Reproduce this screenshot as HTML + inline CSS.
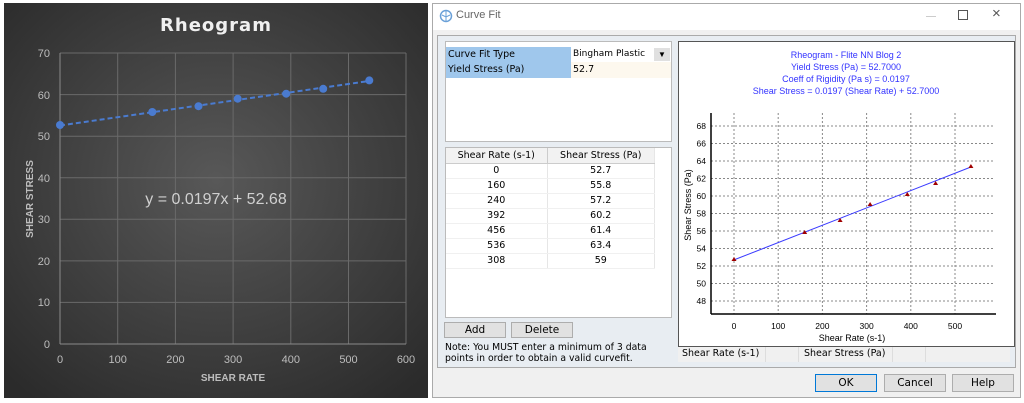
<!DOCTYPE html>
<html><head><style>
*{margin:0;padding:0;box-sizing:border-box}
body{width:1024px;height:403px;background:#fff;position:relative;font-family:"Liberation Sans",sans-serif;overflow:hidden}
.abs{position:absolute}
.t{font-family:"DejaVu Sans","Liberation Sans",sans-serif;font-size:9.5px;color:#000}
.btn{position:absolute;background:#e1e1e1;border:1px solid #adadad;font-size:10.5px;text-align:center;line-height:16px;font-family:"DejaVu Sans",sans-serif}
td{border-right:1px solid #e6e6e6;border-bottom:1px solid #f0f0f0;height:15px;text-align:center;font-family:"DejaVu Sans",sans-serif;font-size:9.5px}
</style></head><body>
<svg class="abs" style="left:0;top:0" width="430" height="403">
<defs><radialGradient id="g" cx="50%" cy="45%" r="70%"><stop offset="0" stop-color="#585858"/><stop offset="1" stop-color="#2b2b2b"/></radialGradient></defs>
<rect x="4" y="3" width="424" height="395" fill="url(#g)"/>
<g stroke="#6a6a6a" stroke-width="1">
<line x1="60" y1="53" x2="406" y2="53"/><line x1="60" y1="94.6" x2="406" y2="94.6"/><line x1="60" y1="136.2" x2="406" y2="136.2"/><line x1="60" y1="177.7" x2="406" y2="177.7"/><line x1="60" y1="219.3" x2="406" y2="219.3"/><line x1="60" y1="260.9" x2="406" y2="260.9"/><line x1="60" y1="302.4" x2="406" y2="302.4"/>
<line x1="117.7" y1="53" x2="117.7" y2="344"/><line x1="175.4" y1="53" x2="175.4" y2="344"/><line x1="233.1" y1="53" x2="233.1" y2="344"/><line x1="290.8" y1="53" x2="290.8" y2="344"/><line x1="348.5" y1="53" x2="348.5" y2="344"/><line x1="406" y1="53" x2="406" y2="344"/>
</g>
<g stroke="#8a8a8a"><line x1="60" y1="53" x2="60" y2="344"/><line x1="60" y1="344" x2="406" y2="344"/></g>
<line x1="60" y1="125.5" x2="369" y2="81" stroke="#4a7bd0" stroke-width="2" stroke-dasharray="5,3"/>
<g fill="#4a7bd0"><circle cx="60" cy="125" r="4"/><circle cx="152.3" cy="112" r="4"/><circle cx="198.5" cy="106.2" r="4"/><circle cx="237.7" cy="98.7" r="4"/><circle cx="286.2" cy="93.7" r="4"/><circle cx="323.2" cy="88.8" r="4"/><circle cx="369.3" cy="80.4" r="4"/></g>
<text x="216" y="31" fill="#f0f0f0" font-size="18" font-weight="bold" text-anchor="middle" font-family="DejaVu Sans" letter-spacing="1">Rheogram</text>
<g fill="#bdbdbd" font-size="11" text-anchor="end" font-family="Liberation Sans">
<text x="50" y="57">70</text><text x="50" y="99">60</text><text x="50" y="140">50</text><text x="50" y="182">40</text><text x="50" y="223">30</text><text x="50" y="265">20</text><text x="50" y="306">10</text><text x="50" y="348">0</text></g>
<g fill="#bdbdbd" font-size="11" text-anchor="middle">
<text x="60" y="363">0</text><text x="117.7" y="363">100</text><text x="175.4" y="363">200</text><text x="233.1" y="363">300</text><text x="290.8" y="363">400</text><text x="348.5" y="363">500</text><text x="406" y="363">600</text></g>
<text x="233" y="381" fill="#bdbdbd" font-size="10" font-weight="bold" text-anchor="middle">SHEAR RATE</text>
<text transform="translate(33,199) rotate(-90)" fill="#bdbdbd" font-size="10" font-weight="bold" text-anchor="middle">SHEAR STRESS</text>
<text x="216" y="204" fill="#d0d0d0" font-size="16" text-anchor="middle">y = 0.0197x + 52.68</text>
</svg>
<div class="abs" style="left:432px;top:3px;width:589px;height:395px;border:1px solid #aaa;background:#f0f0f0"></div>
<div class="abs" style="left:433px;top:4px;width:587px;height:26px;background:#fff"></div>
<svg class="abs" style="left:439px;top:9px" width="14" height="14"><circle cx="7" cy="7" r="5.5" fill="none" stroke="#6aa0d8" stroke-width="1.5"/><path d="M7 2v10M3 6l4 2 4-2" stroke="#6aa0d8" fill="none"/></svg>
<div class="abs" style="left:456px;top:9px;font-size:11px;color:#666">Curve Fit</div>
<div class="abs" style="left:926px;top:16px;width:10px;height:1px;background:#ccc"></div>
<div class="abs" style="left:958px;top:10px;width:10px;height:10px;border:1px solid #555"></div>
<div class="abs" style="left:992px;top:5px;font-size:15px;color:#555">×</div>
<div class="abs" style="left:437px;top:35px;width:579px;height:333px;background:#e8edf2;border:1px solid #aaa"></div>
<div class="abs" style="left:445px;top:41px;width:227px;height:101px;background:#fff;border:1px solid #bbb"></div>
<div class="abs t" style="left:446px;top:47px;width:125px;height:15px;background:#9fc7ec;padding-left:2px;line-height:15px">Curve Fit Type</div>
<div class="abs t" style="left:446px;top:62px;width:125px;height:16px;background:#9fc7ec;padding-left:2px;line-height:16px">Yield Stress (Pa)</div>
<div class="abs t" style="left:571px;top:47px;width:100px;height:15px;background:#fff;padding-left:2px;line-height:15px;font-size:9px">Bingham Plastic</div>
<div class="abs" style="left:654px;top:48px;width:16px;height:13px;background:#e0e0e0;font-size:8px;text-align:center;line-height:13px">▼</div>
<div class="abs t" style="left:571px;top:62px;width:100px;height:16px;background:#fdf8ee;padding-left:2px;line-height:16px">52.7</div>
<div class="abs" style="left:445px;top:147px;width:227px;height:171px;background:#fff;border:1px solid #bbb"></div>
<table class="abs" style="left:446px;top:148px;border-collapse:collapse;width:209px">
<tr style="background:#f2f2f2"><td style="width:101px;border-right:1px solid #ccc;border-bottom:1px solid #ccc">Shear Rate (s-1)</td><td style="border-bottom:1px solid #ccc">Shear Stress (Pa)</td></tr>
<tr><td>0</td><td>52.7</td></tr><tr><td>160</td><td>55.8</td></tr><tr><td>240</td><td>57.2</td></tr><tr><td>392</td><td>60.2</td></tr><tr><td>456</td><td>61.4</td></tr><tr><td>536</td><td>63.4</td></tr><tr><td>308</td><td>59</td></tr>
</table>
<div class="btn" style="left:444px;top:322px;width:62px;height:16px;line-height:14px">Add</div>
<div class="btn" style="left:511px;top:322px;width:62px;height:16px;line-height:14px">Delete</div>
<div class="abs t" style="left:445px;top:342px;line-height:11px;font-size:9.3px">Note: You MUST enter a minimum of 3 data<br>points in order to obtain a valid curvefit.</div>
<svg class="abs" style="left:678px;top:41px" width="337" height="306">
<rect x="0.5" y="0.5" width="336" height="305" fill="#fff" stroke="#555"/>
<g fill="#3333ff" font-size="9" text-anchor="middle" font-family="Liberation Sans">
<text x="168" y="17">Rheogram - Flite NN Blog 2</text><text x="168" y="29">Yield Stress (Pa) = 52.7000</text><text x="168" y="41">Coeff of Rigidity (Pa s) = 0.0197</text><text x="168" y="53">Shear Stress = 0.0197 (Shear Rate)  + 52.7000</text></g>
<g transform="translate(-678,-41)">
<g stroke="#888" stroke-dasharray="2,2">
<line x1="711" y1="126" x2="995" y2="126"/><line x1="711" y1="143.5" x2="995" y2="143.5"/><line x1="711" y1="161" x2="995" y2="161"/><line x1="711" y1="178.5" x2="995" y2="178.5"/><line x1="711" y1="196" x2="995" y2="196"/><line x1="711" y1="213.5" x2="995" y2="213.5"/><line x1="711" y1="231" x2="995" y2="231"/><line x1="711" y1="248.5" x2="995" y2="248.5"/><line x1="711" y1="266" x2="995" y2="266"/><line x1="711" y1="283.5" x2="995" y2="283.5"/><line x1="711" y1="301" x2="995" y2="301"/>
<line x1="734" y1="113" x2="734" y2="314"/><line x1="778.2" y1="113" x2="778.2" y2="314"/><line x1="822.4" y1="113" x2="822.4" y2="314"/><line x1="866.6" y1="113" x2="866.6" y2="314"/><line x1="910.8" y1="113" x2="910.8" y2="314"/><line x1="955" y1="113" x2="955" y2="314"/></g>
<g stroke="#000" stroke-width="1.5"><line x1="711" y1="113" x2="711" y2="314"/><line x1="711" y1="314" x2="996" y2="314"/></g>
<line x1="734" y1="259.9" x2="970.9" y2="167" stroke="#3b3bff" stroke-width="1"/>
<g fill="#a00000"><path d="M734 257l2.5 4h-5z"/><path d="M804.7 230l2.5 4h-5z"/><path d="M840.1 218l2.5 4h-5z"/><path d="M870.1 202l2.5 4h-5z"/><path d="M907.3 192l2.5 4h-5z"/><path d="M935.6 181l2.5 4h-5z"/><path d="M970.9 164l2.5 4h-5z"/></g>
<g font-size="8.5" text-anchor="end" fill="#000">
<text x="706" y="129">68</text><text x="706" y="146.5">66</text><text x="706" y="164">64</text><text x="706" y="181.5">62</text><text x="706" y="199">60</text><text x="706" y="216.5">58</text><text x="706" y="234">56</text><text x="706" y="251.5">54</text><text x="706" y="269">52</text><text x="706" y="286.5">50</text><text x="706" y="304">48</text></g>
<g font-size="8.5" text-anchor="middle"><text x="734" y="329">0</text><text x="778.2" y="329">100</text><text x="822.4" y="329">200</text><text x="866.6" y="329">300</text><text x="910.8" y="329">400</text><text x="955" y="329">500</text></g>
<text x="852" y="341" font-size="9" text-anchor="middle">Shear Rate (s-1)</text>
<text transform="translate(691,205) rotate(-90)" font-size="9" text-anchor="middle">Shear Stress (Pa)</text>
</g></svg>
<div class="abs" style="left:678px;top:347px;width:332px;height:15px;background:#f0f0f0"></div>
<div class="abs t" style="left:682px;top:348px">Shear Rate (s-1)</div>
<div class="abs" style="left:765px;top:347px;width:1px;height:15px;background:#ddd"></div>
<div class="abs" style="left:798px;top:347px;width:1px;height:15px;background:#ddd"></div>
<div class="abs t" style="left:804px;top:348px">Shear Stress (Pa)</div>
<div class="abs" style="left:892px;top:347px;width:1px;height:15px;background:#ddd"></div>
<div class="abs" style="left:925px;top:347px;width:1px;height:15px;background:#ddd"></div>
<div class="btn" style="left:815px;top:374px;width:62px;height:18px;border:1px solid #0078d7;line-height:16px">OK</div>
<div class="btn" style="left:884px;top:374px;width:62px;height:18px;line-height:16px">Cancel</div>
<div class="btn" style="left:952px;top:374px;width:62px;height:18px;line-height:16px">Help</div>
</body></html>
